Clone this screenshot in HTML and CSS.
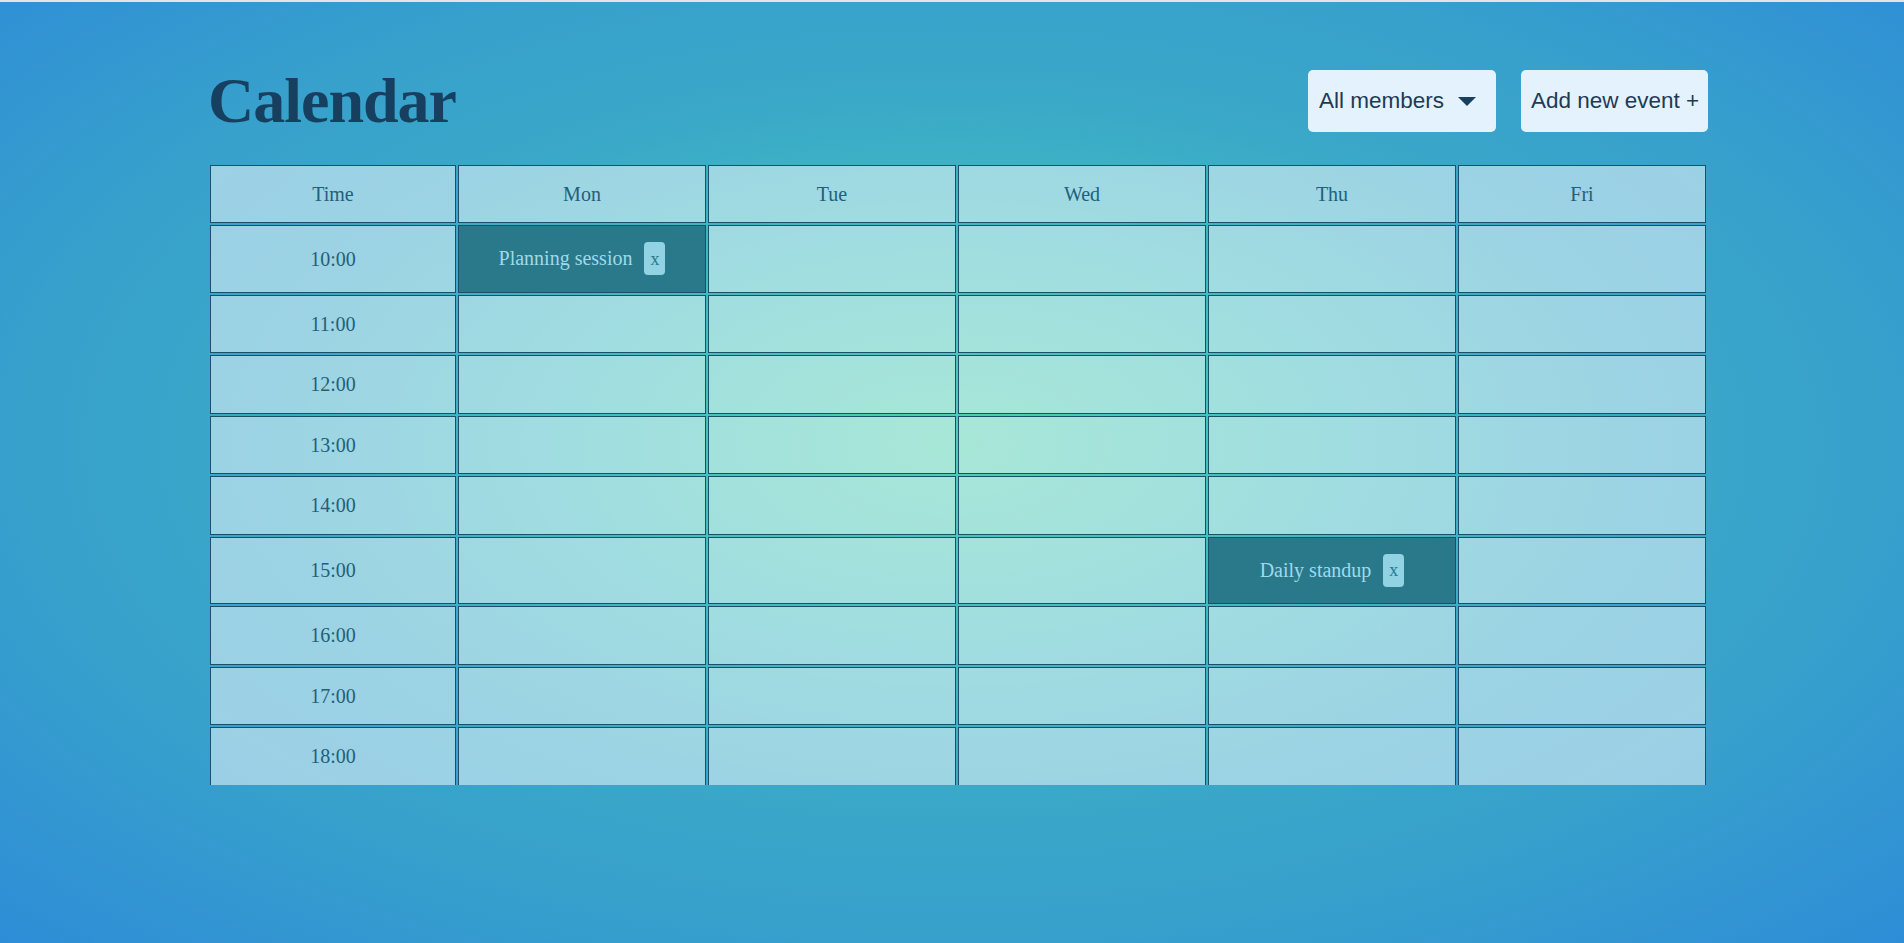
FILE: index.html
```html
<!DOCTYPE html>
<html lang="en">
<head>
<meta charset="utf-8">
<title>Calendar</title>
<link rel="stylesheet" href="styles.css">
</head>
<body>
<div class="page">
  <header class="topbar">
    <h1 class="title">Calendar</h1>
    <div class="actions">
      <div class="select">
        <span>All members</span>
        <svg class="caret" width="18" height="9" viewBox="0 0 18 9"><polygon points="0,0 18,0 9,9"/></svg>
      </div>
      <button class="add">Add new event +</button>
    </div>
  </header>
  <div class="calendar">
    <table class="grid">
      <colgroup>
        <col class="col-time"><col><col><col><col><col>
      </colgroup>
      <thead>
        <tr><td>Time</td><td>Mon</td><td>Tue</td><td>Wed</td><td>Thu</td><td>Fri</td></tr>
      </thead>
      <tbody>
        <tr><td>10:00</td><td class="event"><span>Planning session</span><button class="del">x</button></td><td></td><td></td><td></td><td></td></tr>
        <tr><td>11:00</td><td></td><td></td><td></td><td></td><td></td></tr>
        <tr><td>12:00</td><td></td><td></td><td></td><td></td><td></td></tr>
        <tr><td>13:00</td><td></td><td></td><td></td><td></td><td></td></tr>
        <tr><td>14:00</td><td></td><td></td><td></td><td></td><td></td></tr>
        <tr><td>15:00</td><td></td><td></td><td></td><td class="event"><span>Daily standup</span><button class="del">x</button></td><td></td></tr>
        <tr><td>16:00</td><td></td><td></td><td></td><td></td><td></td></tr>
        <tr><td>17:00</td><td></td><td></td><td></td><td></td><td></td></tr>
        <tr><td>18:00</td><td></td><td></td><td></td><td></td><td></td></tr>
      </tbody>
    </table>
  </div>
</div>
</body>
</html>
```
FILE: styles.css
```css
html {
  background: #e4e4e4;
}
body {
  margin: 2px 0 0;
  min-height: 941px;
  background: radial-gradient(ellipse at 50% 47%, #50cfae 0%, #41bbc1 28%, #3aa8c8 50%, #37a0cc 70%, #2e8dd7 100%);
  font-family: "Liberation Serif", "Times New Roman", serif;
}
.page {
  width: 1500px;
  margin-left: calc(50% - 744px);
  padding-top: 62px;
}
.topbar {
  display: flex;
  justify-content: space-between;
  align-items: center;
}
.title {
  margin: 0;
  font: bold 64px/74px "Liberation Serif", "Times New Roman", serif;
  letter-spacing: -1px;
  color: #173f5f;
}
.actions {
  display: flex;
  gap: 25px;
}
.select,
.add {
  box-sizing: border-box;
  height: 62px;
  background: #e3f2fd;
  border: none;
  border-radius: 5px;
  font: 22.5px "Liberation Sans", Arial, sans-serif;
  color: #1f3a55;
  white-space: nowrap;
}
.select {
  width: 188px;
  padding: 0 20px 0 11px;
  display: flex;
  align-items: center;
  justify-content: space-between;
}
.caret {
  fill: #173f5f;
}
.add {
  width: 187px;
  padding: 0 10px;
  text-align: center;
}
.calendar {
  margin-top: 25px;
  height: 622px;
  overflow: hidden;
}
.grid {
  width: 100%;
  table-layout: fixed;
  border-spacing: 2px;
}
.col-time {
  width: 246px;
}
.grid td {
  border: 1px solid #1b5068;
  background: rgba(255, 255, 255, 0.5);
  padding: 16.25px 8px;
  text-align: center;
  font: 20px/24px "Liberation Serif", "Times New Roman", serif;
  color: #22607a;
}
.grid thead td {
  padding-top: 16px;
  padding-bottom: 16px;
}
.grid td.event {
  background: #2a798b;
  color: #9fd9e8;
}
.del {
  margin-left: 12px;
  padding: 5.5px 6px;
  border: none;
  border-radius: 4px;
  background: #91d3e3;
  color: #2a798b;
  font: 18px/22px "Liberation Serif", "Times New Roman", serif;
}
```
